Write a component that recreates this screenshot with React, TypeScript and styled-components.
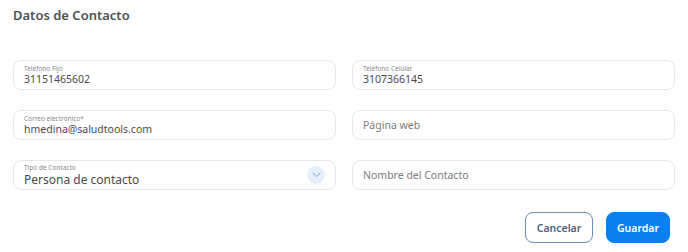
import React from "react";
import styled, { createGlobalStyle } from "styled-components";

const Global = createGlobalStyle`
  html, body { margin: 0; padding: 0; background: #fff; }
  body { font-family: "Noto Sans", "Open Sans", sans-serif; }
  * { box-sizing: border-box; }
`;

const Page = styled.div`
  width: 688px;
  height: 252px;
  padding: 6px 13px 0 13px;
  display: flex;
  flex-direction: column;
`;

const Title = styled.h2`
  margin: 0;
  font-size: 13px;
  line-height: 18px;
  font-weight: 600;
  color: #505050;
`;

const Grid = styled.div`
  margin-top: 36px;
  display: grid;
  grid-template-columns: 1fr 1fr;
  column-gap: 16px;
  row-gap: 20px;
`;

const Field = styled.div`
  height: 30px;
  border: 1px solid #e5e7ea;
  border-radius: 8px;
  padding: 0 10px;
  display: flex;
  align-items: center;
  gap: 8px;
`;

const FieldBody = styled.div`
  flex: 1;
  display: flex;
  flex-direction: column;
  justify-content: center;
  min-width: 0;
`;

const Label = styled.span`
  font-size: 6.5px;
  line-height: 8px;
  color: #8a8a8a;
`;

const Value = styled.span<{ $large?: boolean }>`
  font-size: ${(p) => (p.$large ? "12px" : "10.5px")};
  line-height: 13px;
  margin-top: ${(p) => (p.$large ? "1px" : "0")};
  color: #4a4a4a;
`;

const Placeholder = styled.span`
  font-size: 10.5px;
  color: #7c7c7c;
`;

const ChevronCircle = styled.span`
  width: 18px;
  height: 18px;
  border-radius: 50%;
  background: #e4effc;
  display: flex;
  align-items: center;
  justify-content: center;
`;

const Actions = styled.div`
  margin-top: 22px;
  display: flex;
  justify-content: flex-end;
  gap: 13px;
  padding-right: 5px;
`;

const Button = styled.button<{ $primary?: boolean; $w: number }>`
  width: ${(p) => p.$w}px;
  height: 31px;
  padding: 0;
  border-radius: 8px;
  font-family: inherit;
  font-size: 10.5px;
  font-weight: 600;
  cursor: pointer;
  border: 1px solid ${(p) => (p.$primary ? "#0a7ff0" : "#6a8db8")};
  background: ${(p) => (p.$primary ? "#0a7ff0" : "#fff")};
  color: ${(p) => (p.$primary ? "#fff" : "#4d6385")};
`;

export default function App() {
  return (
    <>
      <Global />
      <Page>
        <Title>Datos de Contacto</Title>
        <Grid>
          <Field>
            <FieldBody>
              <Label>Teléfono Fijo</Label>
              <Value>31151465602</Value>
            </FieldBody>
          </Field>
          <Field>
            <FieldBody>
              <Label>Teléfono Celular</Label>
              <Value>3107366145</Value>
            </FieldBody>
          </Field>
          <Field>
            <FieldBody>
              <Label>Correo electrónico*</Label>
              <Value>hmedina@saludtools.com</Value>
            </FieldBody>
          </Field>
          <Field>
            <Placeholder>Página web</Placeholder>
          </Field>
          <Field>
            <FieldBody>
              <Label>Tipo de Contacto</Label>
              <Value $large>Persona de contacto</Value>
            </FieldBody>
            <ChevronCircle>
              <svg width="9" height="6" viewBox="0 0 9 6" fill="none">
                <path d="M1 1.2 L4.5 4.6 L8 1.2" stroke="#7a9fcf" strokeWidth="1" strokeLinecap="round" strokeLinejoin="round" />
              </svg>
            </ChevronCircle>
          </Field>
          <Field>
            <Placeholder>Nombre del Contacto</Placeholder>
          </Field>
        </Grid>
        <Actions>
          <Button $w={68}>Cancelar</Button>
          <Button $primary $w={64}>Guardar</Button>
        </Actions>
      </Page>
    </>
  );
}
